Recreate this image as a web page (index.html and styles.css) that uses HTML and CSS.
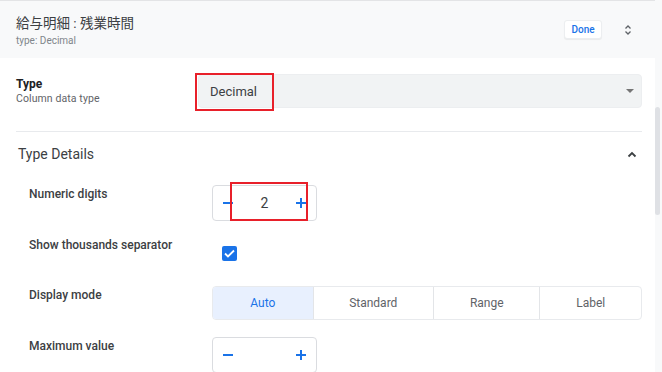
FILE: index.html
```html
<!DOCTYPE html>
<html lang="ja">
<head>
  <meta charset="UTF-8">
  <meta name="viewport" content="width=device-width, initial-scale=1.0">
  <title>給与明細 : 残業時間</title>
  <link rel="stylesheet" href="styles.css">
</head>
<body>
  <div class="panel">
    <header class="head">
      <div class="head-text">
        <div class="title">給与明細 : 残業時間</div>
        <div class="subtitle">type: Decimal</div>
      </div>
      <button class="done">Done</button>
      <svg class="updown" width="8" height="12" viewBox="0 0 8 12">
        <path d="M1.5 4.5 L4 2 L6.5 4.5 M1.5 7.5 L4 10 L6.5 7.5" fill="none" stroke="#5f6368" stroke-width="1.3"/>
      </svg>
    </header>

    <main class="body">
      <div class="type-row">
        <div class="type-label">
          <div class="type-name">Type</div>
          <div class="type-desc">Column data type</div>
        </div>
        <div class="select">
          <span>Decimal</span>
          <span class="caret"></span>
          <div class="mark mark-select"></div>
        </div>
      </div>

      <div class="details-head">
        <span>Type Details</span>
        <svg width="10" height="7" viewBox="0 0 10 7">
          <path d="M1.5 5.5 L5 2 L8.5 5.5" fill="none" stroke="#3c4043" stroke-width="1.8"/>
        </svg>
      </div>

      <div class="rows">
        <div class="row">
          <div class="label">Numeric digits</div>
          <div class="stepper">
            <svg width="10" height="10" viewBox="0 0 10 10"><path d="M0 5 H10" stroke="#1a73e8" stroke-width="2"/></svg>
            <span class="value">2</span>
            <svg width="10" height="10" viewBox="0 0 10 10"><path d="M0 5 H10 M5 0 V10" stroke="#1a73e8" stroke-width="2"/></svg>
            <div class="mark mark-step"></div>
          </div>
        </div>

        <div class="row">
          <div class="label">Show thousands separator</div>
          <div class="check-wrap">
            <span class="checkbox">
              <svg width="11" height="9" viewBox="0 0 11 9"><path d="M1 4.5 L4 7.5 L10 1.5" fill="none" stroke="#fff" stroke-width="1.8"/></svg>
            </span>
          </div>
        </div>

        <div class="row">
          <div class="label">Display mode</div>
          <div class="segments">
            <span class="seg active">Auto</span>
            <span class="seg">Standard</span>
            <span class="seg">Range</span>
            <span class="seg">Label</span>
          </div>
        </div>

        <div class="row">
          <div class="label">Maximum value</div>
          <div class="stepper">
            <svg width="10" height="10" viewBox="0 0 10 10"><path d="M0 5 H10" stroke="#1a73e8" stroke-width="2"/></svg>
            <span class="value"></span>
            <svg width="10" height="10" viewBox="0 0 10 10"><path d="M0 5 H10 M5 0 V10" stroke="#1a73e8" stroke-width="2"/></svg>
          </div>
        </div>
      </div>
    </main>
  </div>
  <div class="scrollbar"><div class="thumb"></div></div>
</body>
</html>
```

FILE: styles.css
```css
body {
  margin: 0;
  width: 662px;
  height: 372px;
  overflow: hidden;
  display: flex;
  font-family: Roboto, "Noto Sans CJK JP", sans-serif;
  color: #3c4043;
  background: #fff;
}
.panel {
  flex: 1;
  min-width: 0;
}
.head {
  height: 57px;
  border-top: 1px solid #e3e4e6;
  background: #f8f9fa;
  display: flex;
  align-items: center;
  padding: 0 0 0 16px;
}
.head-text {
  flex: 1;
  padding-top: 2px;
}
.title {
  font-size: 13.5px;
  line-height: 18px;
  color: #3c4043;
  margin-bottom: 2px;
}
.subtitle {
  font-size: 10px;
  line-height: 14px;
  color: #80868b;
}
.done {
  width: 38px;
  height: 19px;
  padding: 0;
  border: 1px solid #eceef0;
  border-radius: 3px;
  background: #fff;
  box-shadow: 0 1px 1px rgba(0, 0, 0, 0.06);
  color: #1a73e8;
  font-family: Roboto, sans-serif;
  font-size: 10px;
  font-weight: 500;
  margin-right: 22px;
}
.updown {
  margin-right: 23px;
}
.body {
  padding: 16px 13px 0 16px;
}
.type-row {
  display: flex;
  align-items: flex-start;
  padding-bottom: 23px;
  border-bottom: 1px solid #e8eaed;
}
.type-label {
  width: 182px;
  padding-top: 2px;
}
.type-name {
  font-size: 12px;
  font-weight: 700;
  line-height: 16px;
  color: #202124;
}
.type-desc {
  font-size: 10.5px;
  line-height: 14px;
  color: #5f6368;
  letter-spacing: 0.1px;
}
.select {
  position: relative;
  flex: 1;
  height: 34px;
  border-radius: 4px;
  background: #f1f3f4;
  border: 1px solid #eceef0;
  box-sizing: border-box;
  display: flex;
  align-items: center;
  justify-content: space-between;
  padding: 0 7px 0 11px;
  font-size: 13px;
}
.caret {
  width: 0;
  height: 0;
  border-left: 4px solid transparent;
  border-right: 4px solid transparent;
  border-top: 4px solid #757575;
}
.mark {
  position: absolute;
  border: 2px solid #e8202a;
  box-sizing: border-box;
}
.mark-select {
  left: -4px;
  top: -2px;
  width: 79px;
  height: 38px;
}
.mark-step {
  left: 17px;
  top: -4px;
  width: 78px;
  height: 39px;
}
.details-head {
  height: 44px;
  display: flex;
  align-items: center;
  justify-content: space-between;
  padding: 0 5px 0 2px;
  font-size: 14px;
}
.rows {
  padding: 9px 0 0 13px;
  display: flex;
  flex-direction: column;
  gap: 14.5px;
}
.row {
  display: flex;
  align-items: flex-start;
  min-height: 36px;
}
.label {
  width: 183px;
  padding-top: 1px;
  font-size: 12px;
  line-height: 16px;
  font-weight: 500;
  color: #3c4043;
}
.stepper {
  position: relative;
  width: 105px;
  height: 36px;
  box-sizing: border-box;
  border: 1px solid #dadce0;
  border-radius: 4px;
  display: flex;
  align-items: center;
  justify-content: space-between;
  padding: 0 10px;
}
.value {
  font-size: 14px;
  color: #3c4043;
}
.check-wrap {
  height: 36px;
  display: flex;
  align-items: center;
  padding-left: 10px;
}
.checkbox {
  width: 15px;
  height: 15px;
  border-radius: 2px;
  background: #1a73e8;
  display: flex;
  align-items: center;
  justify-content: center;
}
.segments {
  flex: 1;
  height: 34px;
  display: grid;
  grid-template-columns: 100fr 121fr 107fr 102fr;
  border: 1px solid #e8eaed;
  border-radius: 4px;
  box-sizing: border-box;
  overflow: hidden;
}
.seg {
  display: flex;
  align-items: center;
  justify-content: center;
  font-size: 12px;
  color: #5f6368;
  border-left: 1px solid #e3e5e8;
}
.seg:first-child {
  border-left: none;
}
.seg.active {
  background: #e8f0fe;
  color: #1a73e8;
}
.scrollbar {
  width: 7px;
  background: #f8f9fa;
  padding-top: 107px;
}
.thumb {
  height: 108px;
  width: 5px;
  border-radius: 3px;
  background: #dfe1e5;
}
```
